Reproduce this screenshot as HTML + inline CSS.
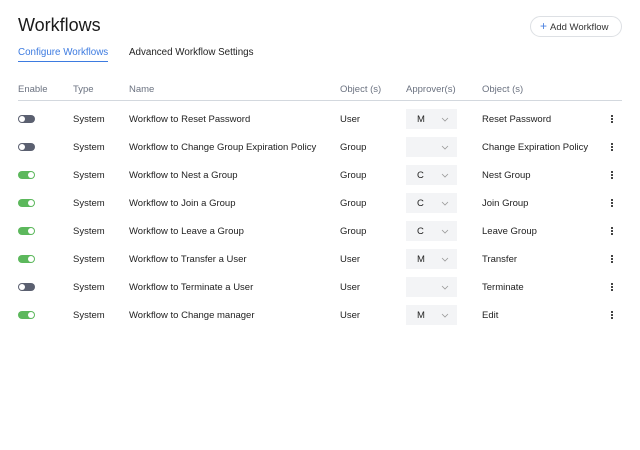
<!DOCTYPE html>
<html><head><style>
*{margin:0;padding:0;box-sizing:border-box}
body{width:640px;height:450px;background:#fff;font-family:"Liberation Sans",sans-serif;color:#222;position:relative;overflow:hidden;font-size:9.5px}
.a{position:absolute;white-space:nowrap}
h1{position:absolute;left:18px;top:15px;font-size:18px;font-weight:normal;color:#1a1a1a}
.btn{position:absolute;left:530px;top:16px;width:92px;height:21px;border:1px solid #dde0e4;border-radius:11px;font-size:9.5px;line-height:19px;padding-left:9px;color:#333}
.btn b{color:#4a80e0;font-weight:normal;font-size:12px;margin-right:3px}
.tab1{left:18px;top:47px;color:#3d7be0;font-size:9.8px;border-bottom:1px solid #3d7be0;padding-bottom:3px}
.tab2{left:129px;top:47px;font-size:9.8px;color:#222}
.hd{top:84px;color:#6b7280;font-size:9.5px}
.line{position:absolute;left:18px;width:604px;top:100px;height:1px;background:#d3d8de}
.tg{position:absolute;left:18px;width:17px;height:8px;border-radius:4px}
.tg i{position:absolute;top:1px;width:6px;height:6px;border-radius:3px;background:#fff}
.off{background:#5b6070}.off i{left:1px}
.on{background:#5cb85c}.on i{right:1px}
.dd{position:absolute;left:406px;width:51px;height:20px;background:#f3f4f6;padding-left:11px;line-height:22px;font-size:9.5px}
.dd svg{position:absolute;right:8px;top:8px}
.dots{position:absolute;left:611px;width:2px}
.dots i{display:block;width:2px;height:2px;background:#444;margin-bottom:1px}
</style></head><body>
<h1>Workflows</h1>
<div class="btn"><b>+</b>Add Workflow</div>
<div class="a tab1">Configure Workflows</div>
<div class="a tab2">Advanced Workflow Settings</div>
<div class="a hd" style="left:18px">Enable</div>
<div class="a hd" style="left:73px">Type</div>
<div class="a hd" style="left:129px">Name</div>
<div class="a hd" style="left:340px">Object (s)</div>
<div class="a hd" style="left:406px">Approver(s)</div>
<div class="a hd" style="left:482px">Object (s)</div>
<div class="line"></div>
<div id="rows"></div>
<script>
var r=[["off","Workflow to Reset Password","User","M","Reset Password"],
["off","Workflow to Change Group Expiration Policy","Group","","Change Expiration Policy"],
["on","Workflow to Nest a Group","Group","C","Nest Group"],
["on","Workflow to Join a Group","Group","C","Join Group"],
["on","Workflow to Leave a Group","Group","C","Leave Group"],
["on","Workflow to Transfer a User","User","M","Transfer"],
["off","Workflow to Terminate a User","User","","Terminate"],
["on","Workflow to Change manager","User","M","Edit"]];
var h="";r.forEach(function(x,i){var c=119+28*i;
h+='<div class="tg '+x[0]+'" style="top:'+(c-4)+'px"><i></i></div>';
h+='<div class="a" style="left:73px;top:'+(c-5)+'px">System</div>';
h+='<div class="a" style="left:129px;top:'+(c-5)+'px">'+x[1]+'</div>';
h+='<div class="a" style="left:340px;top:'+(c-5)+'px">'+x[2]+'</div>';
h+='<div class="dd" style="top:'+(c-10)+'px">'+x[3]+'<svg width="8" height="5"><path d="M1 1L4 4L7 1" stroke="#999" fill="none" stroke-width="0.8"/></svg></div>';
h+='<div class="a" style="left:482px;top:'+(c-5)+'px">'+x[4]+'</div>';
h+='<div class="dots" style="top:'+(c-4)+'px"><i></i><i></i><i></i></div>';});
document.getElementById("rows").innerHTML=h;
</script>
</body></html>
